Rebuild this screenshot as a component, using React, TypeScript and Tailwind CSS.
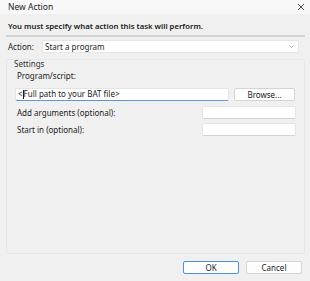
import React from "react";

const FONT = { fontFamily: '"Noto Sans", "Open Sans", "DejaVu Sans", sans-serif' };

function TextBox({ width, focused = false, children }: { width: string; focused?: boolean; children?: React.ReactNode }) {
  return (
    <div
      className={`${width} h-[13px] bg-white border border-[#e4e4e4] rounded-[2px] flex items-center px-[2px] text-[8px] text-[#1b1b1b] ${
        focused ? "border-b-[#5c97d8]" : "border-b-[#d2d2d2]"
      }`}
    >
      {children}
    </div>
  );
}

export default function App() {
  return (
    <div style={FONT} className="w-[310px] h-[281px] bg-[#f0f0f0] flex flex-col text-[#1b1b1b] overflow-hidden">
      {/* Title bar */}
      <div className="h-[14px] bg-[#f8f8f9] flex items-center justify-between pl-[8px] pr-[5px]">
        <span className="text-[8.5px] leading-none text-[#222]">New Action</span>
        <svg width="8" height="8" viewBox="0 0 8 8" className="text-[#333]">
          <path d="M1 1L7 7M7 1L1 7" stroke="currentColor" strokeWidth="0.9" fill="none" />
        </svg>
      </div>

      {/* Instruction */}
      <div className="mt-[6px] h-[12px] pl-[8px] text-[7.75px] leading-[12px] font-semibold text-[#1a1a1a]">
        You must specify what action this task will perform.
      </div>
      <div className="mt-[3px] ml-[6px] w-[299px] h-[2px] bg-[#d2d2d2]" />

      {/* Action row */}
      <div className="mt-[3px] h-[13px] flex items-center">
        <span className="w-[42px] pl-[8px] text-[8px] leading-none">Action:</span>
        <div className="w-[257px] h-[13px] bg-white border border-[#e6e6e6] rounded-[2px] flex items-center justify-between pl-[2px] pr-[4px] text-[8px]">
          <span>Start a program</span>
          <svg width="5" height="3" viewBox="0 0 5 3">
            <path d="M0.5 0.5L2.5 2.5L4.5 0.5" stroke="#9a9a9a" strokeWidth="0.8" fill="none" />
          </svg>
        </div>
      </div>

      {/* Settings group */}
      <div className="mt-[6px] ml-[6px] w-[299px] h-[195px] border border-[#e6e6e6] rounded-[2px] flex flex-col pl-[8px]">
        <span className="-ml-[1px] h-[8px] text-[8px] leading-[8px] text-[#333]">Settings</span>
        <span className="ml-[2px] mt-[3px] h-[10px] text-[8px] leading-[10px]">Program/script:</span>
        <div className="mt-[6px] flex items-center gap-[5px]">
          <TextBox width="w-[214px]" focused>
            <span>&lt;</span>
            <span className="w-[1px] h-[9px] bg-[#1b1b1b]" />
            <span>Full path to your BAT file&gt;</span>
          </TextBox>
          <button className="w-[61px] h-[13px] mt-[1px] bg-[#fdfdfd] border border-[#d4d4d4] rounded-[2px] text-[8px] leading-none flex items-center justify-center">
            Browse...
          </button>
        </div>
        <div className="mt-[5px] flex items-center justify-between pr-[8px]">
          <span className="ml-[2px] text-[8px] leading-none">Add arguments (optional):</span>
          <TextBox width="w-[94px]" />
        </div>
        <div className="mt-[4px] flex items-center justify-between pr-[8px]">
          <span className="ml-[2px] text-[8px] leading-none">Start in (optional):</span>
          <TextBox width="w-[94px]" />
        </div>
      </div>

      {/* Buttons */}
      <div className="mt-[7px] flex justify-end gap-[7px] pr-[8px]">
        <button className="w-[56px] h-[13px] bg-[#fdfdfd] border border-[#4f8fd6] rounded-[2px] text-[8px] leading-none flex items-center justify-center">
          OK
        </button>
        <button className="w-[56px] h-[13px] bg-[#fdfdfd] border border-[#d4d4d4] rounded-[2px] text-[8px] leading-none flex items-center justify-center">
          Cancel
        </button>
      </div>
    </div>
  );
}
